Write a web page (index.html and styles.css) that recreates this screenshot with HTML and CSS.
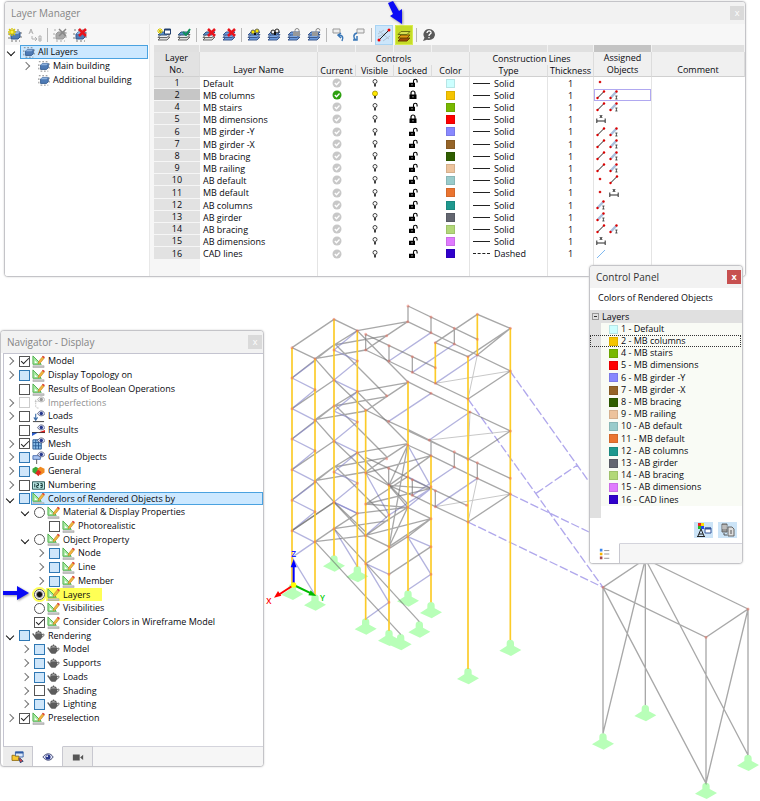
FILE: index.html
```html
<!DOCTYPE html>
<html lang="en">
<head>
<meta charset="utf-8">
<title>Layer Manager</title>
<link rel="stylesheet" href="styles.css">
</head>
<body>
<svg class="sprite" aria-hidden="true">
  <defs>
    <symbol id="i-sheets" viewBox="0 0 14 14"><path d="M1 12l3-3h9l-3 3z" fill="#ddd" stroke="#666"/><path d="M1 9.500l3-3h9l-3 3z" fill="#eee" stroke="#666"/><path d="M1 7l3-3h9l-3 3z" fill="#5b93d0" stroke="#35557c"/></symbol>
    <symbol id="i-bluesheets" viewBox="0 0 14 14"><path d="M1 12l3-3h9l-3 3z" fill="#6b9be0" stroke="#3c598c"/><path d="M1 9.500l3-3h9l-3 3z" fill="#7faae6" stroke="#3c598c"/><path d="M1 7l3-3h9l-3 3z" fill="#6b9be0" stroke="#3c598c"/></symbol>
    <symbol id="i-box" viewBox="0 0 14 14"><path d="M1 2h2M5 2h2M9 2h2M1 5v2M1 9v2M13 4v2M13 8v2M3 13h2M7 13h2M11 13h1" stroke="#777" fill="none"/><path d="M3 6l2-2h7v5l-2 2H3z" fill="#4f7bb5" stroke="#31598f"/><path d="M3 6l2-2h7l-2 2z" fill="#8fb2dd"/></symbol>
    <symbol id="i-graybox" viewBox="0 0 14 14"><path d="M1 2h2M1 5v2M1 9v2M13 4v2M13 8v2M3 13h2M7 13h2M11 13h1" stroke="#aaa" fill="none"/><path d="M3 6l2-2h7v5l-2 2H3z" fill="#aaa" stroke="#999"/></symbol>
    <symbol id="i-redx" viewBox="0 0 14 14"><path d="M6 1l7 7M13 1L6 8" stroke="#e8141c" stroke-width="2.500"/></symbol>
    <symbol id="i-star" viewBox="0 0 14 14"><path d="M4 0v8M0 4h8M1 1l6 6M7 1L1 7" stroke="#d8c800" stroke-width="1.300"/><circle cx="4" cy="4" r="1.500" fill="#fff04a"/></symbol>

    <symbol id="new-group" viewBox="0 0 14 14"><use href="#i-box"/><use href="#i-star"/></symbol>
    <symbol id="rename" viewBox="0 0 14 14"><path d="M1 6l2-5 2 5M2 4h2M4 8v3h5M7 9l2 2-2 2M11 8v5h2v-2h-2M11 8h2v3" stroke="#b0b0b0" fill="none"/></symbol>
    <symbol id="del-gray" viewBox="0 0 14 14"><use href="#i-graybox"/><path d="M6 1l7 7M13 1L6 8" stroke="#888" stroke-width="1.500"/></symbol>
    <symbol id="del-group" viewBox="0 0 14 14"><use href="#i-box"/><use href="#i-redx"/></symbol>
    <symbol id="new-layer" viewBox="0 0 14 14"><use href="#i-sheets"/><path d="M7.500 1h6v5h-6z" fill="#fff" stroke="#23406e"/><path d="M7 1h7v1.500H7z" fill="#23406e"/><path d="M3 0v6M0 3h6M1 1l4 4M5 1L1 5" stroke="#d8c800"/></symbol>
    <symbol id="set-layer" viewBox="0 0 14 14"><use href="#i-sheets"/><path d="M6 4l3 3 4-6" stroke="#12905a" stroke-width="2" fill="none"/></symbol>
    <symbol id="del-layer" viewBox="0 0 14 14"><use href="#i-sheets"/><use href="#i-redx"/></symbol>
    <symbol id="del-all" viewBox="0 0 14 14"><use href="#i-bluesheets"/><use href="#i-redx"/></symbol>
    <symbol id="show-all" viewBox="0 0 14 14"><use href="#i-bluesheets"/><circle cx="6" cy="4" r="2" fill="#f4e400" stroke="#665"/><circle cx="10" cy="3" r="2" fill="#f4e400" stroke="#665"/><path d="M8 5v2" stroke="#111" stroke-width="2"/></symbol>
    <symbol id="hide-all" viewBox="0 0 14 14"><use href="#i-bluesheets"/><circle cx="6" cy="4" r="2" fill="#eee" stroke="#222"/><circle cx="10" cy="3" r="2" fill="#eee" stroke="#222"/><path d="M8 4v3" stroke="#111" stroke-width="2"/></symbol>
    <symbol id="lock-all" viewBox="0 0 14 14"><use href="#i-bluesheets"/><path d="M8 4V2.500a2 2 0 014 0V4" fill="none" stroke="#888"/><path d="M6 4h7v4H6z" fill="#999"/></symbol>
    <symbol id="unlock-all" viewBox="0 0 14 14"><use href="#i-bluesheets"/><path d="M9 4V2.500a2 2 0 014 0" fill="none" stroke="#888"/><path d="M5 4h6v4H5z" fill="#999"/></symbol>
    <symbol id="import" viewBox="0 0 14 14"><path d="M1 1h7v4H1z" fill="#eee" stroke="#999"/><path d="M10 13c2-4 0-6-3-6M9 5L6 7l3 3" fill="none" stroke="#3a78b8" stroke-width="1.500"/></symbol>
    <symbol id="export" viewBox="0 0 14 14"><path d="M5 1h7v4H5z" fill="#eee" stroke="#999"/><path d="M5 5c-4 1-4 5-1 7M1 12h4V8" fill="none" stroke="#3a78b8" stroke-width="1.500"/></symbol>
    <symbol id="line-obj" viewBox="0 0 14 14"><path d="M1 9l10-5M1 6l6-4M6 13l7-5M2 3l10 8" stroke="#b3c3d2" fill="none"/><path d="M2 12L12 2" stroke="#222"/><circle cx="2" cy="12" r="1.500" fill="#e00"/><circle cx="12" cy="2" r="1.500" fill="#e00"/></symbol>
    <symbol id="color-layers" viewBox="0 0 14 14"><path d="M1 13l3-3h9l-3 3z" fill="#9c4a08" stroke="#6d3a04"/><path d="M1 10l3-3h9l-3 3z" fill="#e09b12" stroke="#744c00"/><path d="M1 6.500l3-3h9l-3 3z" fill="#d8e052" stroke="#6a7414"/></symbol>
    <symbol id="help" viewBox="0 0 14 14"><path d="M7 1a6 5.500 0 11-2 10.700L1 13l1.500-3.300A5.500 5.500 0 017 1z" fill="#5a5a5a"/><path d="M5 5c0-3 4.500-2.500 4 0C8.700 6.300 7 6 7 8M7 9v1.300" stroke="#fff" stroke-width="1.300" fill="none"/></symbol>

    <symbol id="check-circle" viewBox="0 0 10 10"><circle cx="5" cy="5" r="4.500" fill="currentColor"/><path d="M2.800 5l1.700 1.700 3-3.200" stroke="#fff" stroke-width="1.300" fill="none"/></symbol>
    <symbol id="bulb" viewBox="0 0 10 10"><circle cx="5" cy="3.500" r="2" fill="#fff" stroke="#333" stroke-width=".9"/><path d="M4.200 6h1.600v2.500H4.200z" fill="#111"/></symbol>
    <symbol id="bulb-on" viewBox="0 0 10 10"><circle cx="5" cy="3.500" r="2.500" fill="#ffe800" stroke="#a09000" stroke-width=".8"/><path d="M4.200 6h1.600v2.500H4.200z" fill="#111"/></symbol>
    <symbol id="lock" viewBox="0 0 10 10"><path d="M3 5V3a2 2 0 014 0v2" fill="none" stroke="#000" stroke-width="1.200"/><path d="M1.500 4.500h7V9h-7z" fill="#000"/><path d="M5 6v1.500" stroke="#aaa"/></symbol>
    <symbol id="unlock" viewBox="0 0 10 10"><path d="M5.500 5V3a1.800 1.800 0 013.600 0v1.500" fill="none" stroke="#000" stroke-width="1.100"/><path d="M1 4.700h6V9H1z" fill="#000"/><path d="M4 6v1.500" stroke="#aaa"/></symbol>

    <symbol id="o-node" viewBox="0 0 10 10"><circle cx="4" cy="4" r="1.300" fill="#d81818"/></symbol>
    <symbol id="o-line" viewBox="0 0 10 10"><path d="M1.500 8L8 1.500" stroke="#222"/><circle cx="1.500" cy="8" r="1.200" fill="#d00"/><circle cx="8" cy="1.500" r="1.200" fill="#d00"/></symbol>
    <symbol id="o-member" viewBox="0 0 10 10"><path d="M1.500 8L7.500 1.500" stroke="#a9bfdc" stroke-width="2.500"/><circle cx="1.500" cy="8" r="1.200" fill="#d00"/><circle cx="7.500" cy="1.500" r="1.200" fill="#d00"/><path d="M6.300 6h2.200M7.400 6v3M6.300 9h2.200" stroke="#333" stroke-width=".8"/></symbol>
    <symbol id="o-dim" viewBox="0 0 10 10"><path d="M.8 4.500V9M9.200 4.500V9M1 7h8M3.800 1l2.400 3M6.200 1L3.800 4" stroke="#111" stroke-width=".9"/></symbol>
    <symbol id="o-cad" viewBox="0 0 10 10"><path d="M1 9l8-8" stroke="#7db8f0"/></symbol>

    <symbol id="t-draw" viewBox="0 0 14 14"><path d="M1 1v9h9z" fill="#a6e8a0" stroke="#4cae4c"/><path d="M3 6v2.500h2.500z" fill="#fff"/><path d="M1 11.500h12v2H1z" fill="#c4c4c4" stroke="#999" stroke-width=".5"/><path d="M6.500 9.500l1-3 4-5 2 1.500-4 5z" fill="#f2b63c" stroke="#b87c20" stroke-width=".6"/><path d="M11.300 1.300l2 1.600" stroke="#e03c3c" stroke-width="1.600"/></symbol>
    <symbol id="i-eye" viewBox="0 0 14 14"><path d="M6 4c2-4 6-4 8 0-2 3-6 3-8 0z" fill="#e6ebff" stroke="#39405e" stroke-width=".8"/><circle cx="10" cy="3.800" r="1.800" fill="#26388c"/></symbol>
    <symbol id="t-imp" viewBox="0 0 14 14"><g opacity=".55"><path d="M4 4v7q0 2 3 2M3 6h4" stroke="#888" fill="none" stroke-dasharray="2 1"/><path d="M6 4c2-4 6-4 8 0-2 3-6 3-8 0z" fill="#eee" stroke="#444" stroke-width=".8"/><circle cx="10" cy="3.800" r="1.800" fill="#444"/></g></symbol>
    <symbol id="t-loads" viewBox="0 0 14 14"><path d="M1 12.500h12" stroke="#333"/><path d="M4 4v7M2 8l2 3 2-3" stroke="#3d6ca8" fill="none" stroke-width="1.200"/><use href="#i-eye"/></symbol>
    <symbol id="t-results" viewBox="0 0 14 14"><path d="M0 9h7l-7 4z" fill="#2a5ed0"/><path d="M6 9.500h8V6.500z" fill="#e02020"/><path d="M0 9.200h14" stroke="#222" stroke-width=".8"/><use href="#i-eye"/></symbol>
    <symbol id="t-mesh" viewBox="0 0 14 14"><path d="M1 3h9v10H1z" fill="#8cc0ea" stroke="#2a5c94"/><path d="M4 3v10M7 3v10M1 6h9M1 9.500h9" stroke="#2a5c94"/><use href="#i-eye"/></symbol>
    <symbol id="t-guide" viewBox="0 0 14 14"><path d="M1 5h8v4H1z" fill="#a9c4f0" stroke="#4a6eb0"/><path d="M5 9v5" stroke="#555"/><use href="#i-eye"/></symbol>
    <symbol id="t-general" viewBox="0 0 14 14"><path d="M4 2l4 2v4L4 10 .5 7.500V4z" fill="#3aa83a"/><path d="M9 2l4.500 2v4L9 11 6 8V4z" fill="#f08a20"/><path d="M6.500 5L10 7.500 7 12 3.500 9z" fill="#e02a20"/></symbol>
    <symbol id="t-num" viewBox="0 0 14 14"><path d="M.5 3h13v8H.5z" fill="#bdeae6" stroke="#1e4a4a"/><path d="M3 5v4M5 5h2v2H5v2h2M9 5h2v4H9M9 7h2" stroke="#0b2b2b" fill="none"/></symbol>
    <symbol id="t-pot" viewBox="0 0 14 14"><path d="M3.500 4.500h7c1.500 3 0 5.500-1.500 7H5C3 10 3 9 1 6.500L0 5l1.500-.5L3.500 7z" fill="#5c5c5c"/><path d="M4 4q3-2 6 0M7 1.500v1.500" stroke="#5c5c5c" stroke-width="1.300" fill="none"/><path d="M10.500 6q3-1.500 2.500.5T10 9" stroke="#5c5c5c" fill="none"/></symbol>

    <symbol id="tab-project" viewBox="0 0 16 14"><path d="M5 1h9v6H5z" fill="#dce8fa" stroke="#2d5ba6"/><path d="M5 1h9v2H5z" fill="#2d5ba6"/><path d="M1 5h3l1 1h4v5H1z" fill="#f7c832" stroke="#8d6a10"/><path d="M10 8l4 4-2 .5L11 14 9 9z" fill="#d44" stroke="#247"/></symbol>
    <symbol id="tab-eye" viewBox="0 0 16 14"><path d="M2 7c4-5 9-5 12 0-3 5-8 5-12 0z" fill="#e6e9fa" stroke="#2c3562"/><circle cx="8" cy="7" r="3" fill="#27378c"/><circle cx="7" cy="6" r="1" fill="#fff"/></symbol>
    <symbol id="tab-camera" viewBox="0 0 16 14"><path d="M2 4h8v7H2zM10.500 7.500L14 4.500v6z" fill="#555"/></symbol>
    <symbol id="tab-legend" viewBox="0 0 16 14"><path d="M2 1h3v3H2z" fill="#3f86ea"/><path d="M2 5.500h3v3H2z" fill="#f4b400"/><path d="M2 10h3v3H2z" fill="#a84848"/><path d="M7 3h6M7 7h6M7 12h6" stroke="#888"/></symbol>
    <symbol id="cp-colors" viewBox="0 0 16 14"><path d="M2 0h3v3H2z" fill="#e22"/><path d="M5 0h3v3H5z" fill="#fd0"/><path d="M2 3h3v3H2z" fill="#2b2"/><path d="M5 3h3v3H5z" fill="#24e"/><path d="M2 13l3-7 3 7M3 11h4M1 13.500h8" stroke="#222" fill="none"/><path d="M9 5h6v5H9z" fill="#fff" stroke="#34549a"/><path d="M9 5.500h6" stroke="#34549a" stroke-width="2"/></symbol>
    <symbol id="cp-copy" viewBox="0 0 16 14"><path d="M2 1h5v8H2z" fill="#999" stroke="#666"/><path d="M2 3h5M2 5h5" stroke="#ddd"/><path d="M8 4h4l2 2v7H8z" fill="#ddd" stroke="#666"/><path d="M10 8h2M10 10h2M4 10v2h3" stroke="#555" fill="none"/></symbol>

    <g id="flight"><path class="beam" d="M96 264L222 165 292 122 443 95 380 137 317 180 165 206 222 165 380 137M96 356L222 270M165 206L222 270 317 360M228 165L380 317M292 122L443 275"/><path class="brace" d="M165 212L96 264 165 299 96 356 165 391M292 122L222 180 292 213 222 270 292 304"/></g>
  </defs>
</svg>

<main class="desktop">
  <svg class="model" viewBox="-780 -870 2280 2403" role="img" aria-label="Wireframe model">
    <g id="supports"></g>
    <path class="cad" d="M750 243L987 575M624 327L1029 892M750 612L987 726M624 696L1029 892M828 610L952 525"/>
    <path class="thin" d="M526 280L751 243M624 327L652 195M508 450L751 423M630 366L624 508M526 650L751 612M624 696L652 565"/>
    <path class="brace" d="M387 213L513 128M457 247L583 162M526 280L652 195M386 394L513 310M508 450L630 366M526 650L652 565M457 616L583 531M443 465L513 590M317 549L387 675 513 595M317 736L387 675M443 560L513 595 443 652M317 821L387 853M317 821L387 937 317 987M443 740L513 770M443 740L513 853 443 900M222 716L292 830M96 802L165 755M96 802L165 915M222 637L292 670"/>
    <use href="#flight"/><use href="#flight" y="183"/><use href="#flight" y="366"/>
    <path class="beam" d="M96 173L222 88 292 122M96 173L165 206M444 48L652 148M444 48V95M513 81V128M583 115V162M443 95L652 195 751 243 624 327 317 180M317 133L526 233M317 133V180M387 167V213M457 200V247M526 158L652 73 751 115 624 200zM652 195L751 115M443 275L513 310 630 366 751 423 624 508 443 418M317 360L386 394 508 450 624 508M443 422L751 565M513 450V497M583 485V531M652 518V565M443 465L513 497 652 565 751 612 624 696 526 650 457 616 386 586 317 549M317 502L457 569 620 646M386 535V586M457 569V616M526 602V650"/>
    <path class="beam" d="M443 465L387 586M513 497L317 549M513 497L387 586M317 642L443 560M317 642L513 595M387 586L443 652 387 770M387 770L443 465M317 736L513 686 387 770zM317 642L443 652 513 686M317 821L443 740 513 686M387 853L513 770M387 586L513 595M96 722L222 637M165 755L222 716 292 670 443 652 380 692 317 737 165 755M222 716L386 692M165 755L422 1033M222 716L478 995M222 637L317 737"/>
    <path class="beam" d="M1029 892L1156 807 1464 957 1338 1042zM1029 892V1330M1156 807V1245M1338 1042V1480M1464 957V1395M1156 807L1464 1395M1156 807L1029 1330M1029 892L1338 1480 1464 957"/>
    <path class="column" d="M96 173V885M165 206V915M222 88V797M292 122V830M317 360V990M387 586V1022M444 275V903M513 497V937M526 158V280M624 200V1137M652 73V195M751 115V1050"/>
    <path class="node" d="M96 173h0M222 88h0M292 122h0M165 206h0M317 133h0M317 180h0M387 167h0M387 213h0M457 200h0M457 247h0M444 48h0M443 95h0M513 81h0M513 128h0M583 115h0M583 162h0M526 158h0M526 233h0M526 280h0M624 200h0M624 327h0M652 73h0M652 148h0M652 195h0M751 115h0M751 243h0M380 137h0M380 317h0M380 506h0M96 264h0M96 356h0M96 447h0M96 539h0M96 631h0M96 722h0M165 299h0M165 391h0M165 482h0M165 575h0M165 665h0M165 755h0M222 180h0M222 270h0M222 348h0M222 454h0M222 546h0M222 637h0M222 716h0M292 213h0M292 304h0M292 396h0M292 488h0M292 580h0M292 670h0M317 360h0M386 394h0M443 275h0M513 310h0M630 366h0M751 423h0M508 450h0M624 508h0M583 485h0M652 518h0M751 565h0M513 497h0M583 531h0M652 565h0M751 612h0M624 696h0M620 646h0M526 602h0M526 650h0M457 569h0M457 616h0M386 535h0M387 586h0M317 549h0M317 642h0M317 737h0M317 821h0M387 675h0M387 770h0M387 853h0M387 937h0M443 465h0M443 560h0M443 652h0M443 740h0M513 590h0M513 686h0M513 770h0M513 853h0M1029 892h0M1338 1042h0M1464 957h0"/>
    <g class="axis"><path stroke="#00f" d="M101 885V825"/><path stroke="#0b0" d="M101 885L155 911"/><path stroke="#f00" d="M101 885L55 915"/><polygon fill="#00f" points="92,832 101,808 110,832"/><polygon fill="#0b0" points="145,916 169,918 152,901"/><polygon fill="#f00" points="42,923 54,903 64,917"/></g>
    <circle cx="101" cy="885" r="8" fill="#ff0"/>
    <g class="axis-name"><text x="94" y="801" fill="#22f">Z</text><text x="19" y="943" fill="#f00">X</text><text x="180" y="934" fill="#0c0">Y</text></g>
  </svg>

  <section class="window manager">
    <header class="titlebar"><h2>Layer Manager</h2><button class="close" aria-label="Close">x</button></header>
    <div class="split">
      <aside class="groups">
        <div class="toolbar" data-icons="new-group rename | del-gray del-group"></div>
        <ul class="grouptree">
          <li class="root"><i class="chev open"></i><a href="#" class="picked"><svg><use href="#i-box"/></svg>All Layers</a></li>
          <li class="child"><i class="chev"></i><a href="#"><svg><use href="#i-box"/></svg>Main building</a></li>
          <li class="child"><i class="chev none"></i><a href="#"><svg><use href="#i-box"/></svg>Additional building</a></li>
        </ul>
      </aside>
      <div class="layers">
        <div class="toolbar" data-icons="new-layer set-layer | del-layer del-all | show-all hide-all lock-all unlock-all | import export | line-obj color-layers | help"></div>
        <table class="grid">
          <colgroup><col class="c-no"><col class="c-name"><col class="c-flag"><col class="c-flag"><col class="c-flag"><col class="c-flag"><col class="c-type"><col class="c-thick"><col class="c-obj"><col></colgroup>
          <thead>
            <tr class="strip"><td></td><td></td><td></td><td></td><td></td><td></td><td></td><td></td><td class="here"></td><td></td></tr>
            <tr><th rowspan="2" class="no">Layer<br>No.</th><th rowspan="2" class="low">Layer Name</th><th colspan="4">Controls</th><th colspan="2">Construction Lines</th><th rowspan="2">Assigned<br>Objects</th><th rowspan="2" class="low">Comment</th></tr>
            <tr><th>Current</th><th>Visible</th><th>Locked</th><th>Color</th><th>Type</th><th>Thickness</th></tr>
          </thead>
          <tbody id="rows"></tbody>
        </table>
      </div>
    </div>
  </section>

  <section class="window navigator">
    <header class="titlebar"><h2>Navigator - Display</h2><button class="close" aria-label="Close">x</button></header>
    <ul class="tree" id="tree"></ul>
    <nav class="tabs"><button aria-label="Project"><svg><use href="#tab-project"/></svg></button><button class="active" aria-label="Display"><svg><use href="#tab-eye"/></svg></button><button aria-label="Views"><svg><use href="#tab-camera"/></svg></button></nav>
  </section>

  <section class="window panel">
    <header class="titlebar"><h2>Control Panel</h2><button class="close" aria-label="Close">x</button></header>
    <h3>Colors of Rendered Objects</h3>
    <div class="legend">
      <h4><button class="fold" aria-label="Collapse"></button>Layers</h4>
      <ul id="legend"></ul>
    </div>
    <div class="actions"><button aria-label="Color settings"><svg><use href="#cp-colors"/></svg></button><button aria-label="Copy"><svg><use href="#cp-copy"/></svg></button></div>
    <nav class="tabs"><button class="active" aria-label="Legend"><svg><use href="#tab-legend"/></svg></button></nav>
  </section>

  <svg class="pointer down" viewBox="0 0 20 26"><path d="M2 3l5-2 6 10 3-2 0 15-12-8 3-2z"/></svg>
  <svg class="pointer right" viewBox="0 0 28 16"><path d="M1 6h14V1l12 7-12 7v-5H1z"/></svg>
</main>
<script src="app.js"></script>
</body>
</html>
```
FILE: styles.css
```css
* { box-sizing: border-box; }
body { margin: 0; background: #fff; color: #08080e; font: 9px/12px "Open Sans", "Noto Sans", sans-serif; }
h2, h3, h4, ul { margin: 0; padding: 0; font-size: 9px; font-weight: 400; list-style: none; }
button { padding: 0; border: 0; background: none; font: inherit; color: inherit; }
a { color: inherit; text-decoration: none; }
.sprite { position: absolute; width: 0; height: 0; }
.desktop { position: relative; overflow: hidden; }

/* 3D view */
.model { display: block; width: 100%; }
.model path { fill: none; }
.model .base { fill: #b8ffb8; }
.beam { stroke: #6e6e6e; stroke-opacity: .6; stroke-width: 4; fill: none; }
.brace { stroke: #8080c8; stroke-opacity: .6; stroke-width: 4; fill: none; }
.thin { stroke: #c8c8c8; stroke-width: 3; }
.cad { stroke: #b0a8ec; stroke-width: 4; stroke-dasharray: 26 8; }
.column { stroke: #fccb28; stroke-width: 5; }
.node { stroke: #f06450; stroke-opacity: .45; stroke-width: 9; stroke-linecap: round; }
.axis path { stroke-width: 6; }
.axis-name { font-size: 25px; font-weight: 600; }

/* windows */
.window { position: absolute; display: flex; flex-direction: column; background: #fff; border: 1px solid #c4c4c8; border-radius: 4px; overflow: hidden; box-shadow: 0 0 2px #ccc; }
.manager { left: 4px; right: 14px; top: 1px; }
.navigator { left: 0; top: 330px; width: 264px; }
.panel { right: 17px; top: 265px; width: 154px; }
.titlebar { display: flex; align-items: center; height: 22px; padding: 0 1px 0 6px; background: #f2f2f2; color: #858585; }
.titlebar h2 { flex: 1; font-size: 10px; }
.close { width: 14px; height: 14px; background: #dadada; color: #fff; line-height: 12px; }
.panel .titlebar { color: #333; }
.panel .close { background: #c75050; font-weight: 700; }

/* layer manager */
.split { display: flex; background: #f6f6f6; }
.groups { display: flex; flex-direction: column; width: 145px; margin-right: 4px; border-right: 1px solid #e8e8e8; }
.layers { flex: 1; min-width: 0; }
.toolbar { display: flex; align-items: center; gap: 4px; height: 21px; padding-left: 2px; background: #f7f7f7; }
.toolbar button { display: grid; place-items: center; width: 16px; height: 18px; }
.toolbar svg { width: 14px; height: 14px; }
.toolbar .bar { width: 1px; height: 14px; background: #b8b8b8; }
.toolbar .toggled { background: #cce6fb; outline: 1px solid #a8d4f4; }
.toolbar .marked { background: #c5dc28; outline: 1px solid #d8ec50; }
.grouptree { flex: 1; padding-right: 1px; background: #fff; }
.grouptree li { display: flex; align-items: center; height: 14px; }
.grouptree .child { padding-left: 15px; }
.grouptree a { display: flex; align-items: center; gap: 3px; height: 14px; padding: 0 3px; }
.grouptree .picked { flex: 1; background: #cce8ff; border: 1px solid #4aa2e0; padding: 0 2px; }
.grouptree svg { width: 12px; height: 12px; }
.chev { flex: none; width: 15px; height: 10px; padding-right: 4px; display: grid; place-items: center; }
.chev::before { content: ""; width: 5px; height: 5px; border: solid #777; border-width: 1px 1px 0 0; transform: rotate(45deg); }
.chev.open::before { border-color: #111; border-width: 0 1px 1px 0; }
.chev.none::before { display: none; }

.grid { width: 100%; table-layout: fixed; border-collapse: separate; border-spacing: 0; background: #fff; }
.c-no { width: 46px; } .c-name { width: 118px; } .c-flag { width: 38px; } .c-type { width: 78px; } .c-thick { width: 46px; } .c-obj { width: 58px; }
.grid th, .grid td { padding: 0; }
.grid th { background: #f0f0f0; font-weight: 400; text-align: center; vertical-align: middle; height: 12px; border-right: 1px solid #dcdcdc; border-bottom: 1px solid #d0d0d0; line-height: 11px; }
.grid th[colspan] { border-bottom: 0; }
.grid thead .no { background: #e2e2e2; }
.grid th[rowspan] { height: 25px; line-height: 12px; }
.grid th.low { vertical-align: bottom; }
.strip td { height: 7px; background: #e0e0e0; border-right: 1px solid #f2f2f2; }
.strip .here { background: #c4c4c4; }
tbody tr { height: 12px; line-height: 11px; }
tbody tr:nth-child(5n) { height: 13px; }
tbody td { height: 12px; text-align: center; vertical-align: middle; }
tbody td:nth-child(2), tbody td:nth-child(6), tbody td:nth-child(7), tbody td:nth-child(8), tbody td:nth-child(9) { border-right: 1px solid #e4e4e4; }
tbody .no { background: #e2e2e2; border-bottom: 1px solid #f6f6f6; }
tbody .current .no { background: #c6c6c6; }
tbody .name { padding-left: 3px; text-align: left; }
tbody button { display: block; width: 10px; height: 10px; margin: 0 auto; color: #c8c8c8; }
tbody .current button { color: #2ea010; }
tbody svg { display: block; width: 10px; height: 10px; }
.swatch { display: block; width: 9px; height: 9px; margin: 0 auto; border: 1px solid rgba(0, 0, 0, .1); }
.type { display: flex; align-items: center; gap: 4px; padding-left: 3px; }
.type i { width: 17px; border-top: 1px solid #222; }
.type .dashed { border-top-style: dashed; }
.objs { display: flex; align-items: center; gap: 3px; height: 12px; padding-left: 2px; }
.current .objs { border: 1px solid #b0a8f0; padding-left: 1px; }
.filler, .filler td { height: 16px; }
tbody .filler .no { background: #f6f6f6; }

/* navigator */
.tree { margin-left: 2px; padding-bottom: 21px; border-left: 1px solid #c4c4d0; border-top: 1px solid #c4c4d0; }
.tree li { display: flex; align-items: center; height: 14px; }
.tree li:nth-child(7n), .tree li:nth-child(7n+4) { height: 13px; }
.tree .l1 { padding-left: 15px; }
.tree .l2 { padding-left: 30px; }
.tree input { appearance: none; flex: none; width: 11px; height: 11px; margin: 0 1px 0 0; border: 1px solid #555; background: #fff; }
.tree input.part { background: #cfe6fa; border-color: #2f78b4; }
.tree input:disabled { border-color: #ccc; }
.tree input[type=radio] { border-radius: 50%; }
.tree input[type=radio]:checked { background: radial-gradient(#111 0 2px, #fff 4px); }
.tree input[type=checkbox]:checked { display: grid; place-items: center; }
.tree input[type=checkbox]:checked::before { content: ""; width: 7px; height: 3px; border: solid #222; border-width: 0 0 1px 1px; transform: translateY(-1px) rotate(-45deg); }
.tree label { display: flex; align-items: center; gap: 3px; height: 100%; padding: 0 1px; white-space: nowrap; }
.tree svg { width: 13px; height: 13px; }
.tree .off { color: #909090; }
.tree .picked label { flex: 1; background: #cce8ff; outline: 1px solid #4aa2e0; outline-offset: -1px; }
.tree .marked label { padding-right: 12px; background: #ff5; }
.tree .marked input { box-shadow: 0 0 0 2px #ff5; }
.tabs { display: flex; height: 20px; margin-left: 2px; background: linear-gradient(#d4d4dc 1px, #f6f6f6 1px); }
.tabs button { display: grid; place-items: center; width: 30px; background: #ececec; border: solid #c8c8d0; border-width: 1px 1px 0 0; }
.tabs .active { background: #fff; border-top-color: #fff; }
.tabs svg { width: 14px; height: 12px; }

/* control panel */
.panel h3 { height: 22px; padding: 4px 0 0 8px; }
.legend { padding-bottom: 12px; background: linear-gradient(90deg, #e0e0e0 11px, #fff 11px); }
.legend h4 { display: flex; align-items: center; gap: 3px; height: 13px; padding-left: 2px; background: #e0e0e0; }
.fold { display: grid; place-items: center; width: 7px; height: 7px; border: 1px solid #999; }
.fold::before { content: ""; width: 3px; height: 1px; background: #333; }
.legend ul { margin-left: 11px; background: #f9fbf5; }
.legend li { display: flex; align-items: center; gap: 3px; height: 12px; padding-left: 8px; }
.legend li:nth-child(5n) { height: 13px; }
.legend .swatch { margin: 0; }
.legend .current { margin-left: -11px; margin-right: 1px; padding-left: 19px; outline: 1px dotted #333; outline-offset: -1px; }
.actions { display: flex; justify-content: flex-end; gap: 5px; padding: 4px 5px 5px; }
.actions button { display: grid; place-items: center; width: 19px; height: 16px; background: #cce4f7; }
.actions svg { width: 16px; height: 14px; }
.panel .tabs { margin: 0; }

/* callout arrows */
.pointer { position: absolute; fill: #0a0af5; filter: drop-shadow(1px 1px 1px #999); }
.down { left: 386px; top: 0; width: 20px; height: 26px; }
.right { left: 2px; top: 585px; width: 28px; height: 16px; }
```
FILE: app.js
```js
const icon = id => `<svg><use href="#${id}"/></svg>`;

// number, name, color, assigned objects
const layers = [
  [1, "Default", "#ccffff", "node"],
  [2, "MB columns", "#f5c400", "line member"],
  [4, "MB stairs", "#78b800", "line member"],
  [5, "MB dimensions", "#ff0000", "dim"],
  [6, "MB girder -Y", "#8888ff", "line member"],
  [7, "MB girder -X", "#956428", "line member"],
  [8, "MB bracing", "#2f5e00", "line member"],
  [9, "MB railing", "#edc39c", "line member"],
  [10, "AB default", "#98cbcb", "node line"],
  [11, "MB default", "#ea7430", "node dim"],
  [12, "AB columns", "#1e988e", "member"],
  [13, "AB girder", "#636670", "member"],
  [14, "AB bracing", "#b2d878", "line member"],
  [15, "AB dimensions", "#e07aff", "dim"],
  [16, "CAD lines", "#3000cc", "cad"]
];
const locked = [2, 5];

document.getElementById("rows").innerHTML = layers.map(([no, name, color, objs]) => `
<tr class="${no === 2 ? "current" : ""}"><td class="no">${no}</td><td class="name">${name}</td>
<td><button aria-label="Current">${icon("check-circle")}</button></td>
<td><button aria-label="Visible">${icon(no === 2 ? "bulb-on" : "bulb")}</button></td>
<td><button aria-label="Locked">${icon(locked.includes(no) ? "lock" : "unlock")}</button></td>
<td><span class="swatch" style="background:${color}"></span></td>
<td><div class="type"><i class="${no === 16 ? "dashed" : ""}"></i>${no === 16 ? "Dashed" : "Solid"}</div></td>
<td>1</td><td><div class="objs">${objs.split(" ").map(o => icon("o-" + o)).join("")}</div></td><td></td></tr>`).join("")
  + `<tr class="filler"><td class="no"></td>${"<td></td>".repeat(9)}</tr>`;

document.getElementById("legend").innerHTML = layers.map(([no, name, color]) =>
  `<li class="${no === 2 ? "current" : ""}"><span class="swatch" style="background:${color}"></span>${no} - ${name}</li>`).join("");

// level, arrow (> closed, v open, - none), box state, icon, label
const tree = [
  [0, ">", "on", "draw", "Model"],
  [0, ">", "part", "draw", "Display Topology on"],
  [0, "-", "", "draw", "Results of Boolean Operations"],
  [0, ">", "off", "imp", "Imperfections"],
  [0, ">", "", "loads", "Loads"],
  [0, "-", "", "results", "Results"],
  [0, ">", "on", "mesh", "Mesh"],
  [0, ">", "part", "guide", "Guide Objects"],
  [0, ">", "part", "general", "General"],
  [0, ">", "", "num", "Numbering"],
  [0, "v", "part", "draw", "Colors of Rendered Objects by", "picked"],
  [1, "v", "radio", "draw", "Material &amp; Display Properties"],
  [2, "-", "", "draw", "Photorealistic"],
  [1, "v", "radio", "draw", "Object Property"],
  [2, ">", "part", "draw", "Node"],
  [2, ">", "part", "draw", "Line"],
  [2, ">", "part", "draw", "Member"],
  [1, "-", "radio on", "draw", "Layers", "marked"],
  [1, "-", "radio", "draw", "Visibilities"],
  [1, "-", "on", "draw", "Consider Colors in Wireframe Model"],
  [0, "v", "part", "pot", "Rendering"],
  [1, ">", "part", "pot", "Model"],
  [1, ">", "part", "pot", "Supports"],
  [1, ">", "part", "pot", "Loads"],
  [1, ">", "", "pot", "Shading"],
  [1, ">", "part", "pot", "Lighting"],
  [0, ">", "on", "draw", "Preselection"]
];
const arrows = { ">": "", "v": "open", "-": "none" };
document.getElementById("tree").innerHTML = tree.map(([level, arrow, state, pic, text, extra = ""], i) => {
  const radio = state.startsWith("radio");
  return `<li class="l${level} ${extra} ${state === "off" ? "off" : ""}"><i class="chev ${arrows[arrow]}"></i>
<input id="t${i}" type="${radio ? "radio" : "checkbox"}" ${radio ? 'name="by"' : ""} class="${state === "part" ? "part" : ""}" ${state.endsWith("on") ? "checked" : ""} ${state === "off" ? "disabled" : ""}>
<label for="t${i}">${icon("t-" + pic)}${text}</label></li>`;
}).join("");

const extras = { "line-obj": "toggled", "color-layers": "marked" };
document.querySelectorAll(".toolbar").forEach(bar => {
  bar.innerHTML = bar.dataset.icons.split(" ").map(n =>
    n === "|" ? '<span class="bar"></span>' : `<button aria-label="${n}" class="${extras[n] || ""}">${icon(n)}</button>`).join("");
});

// base centre of each support in model units
const bases = [[97, 912], [165, 944], [222, 827], [292, 859], [317, 1016], [387, 1050], [422, 1063], [478, 1025],
  [444, 932], [513, 967], [624, 1165], [751, 1080], [1029, 1361], [1156, 1276], [1338, 1509], [1464, 1425]];
document.getElementById("supports").innerHTML = bases.map(([x, y]) =>
  `<path class="base" transform="translate(${x} ${y})" d="M-33 2L-11-12V-20a11 11 0 0122 0v8L33 0 2 18z"/>`).join("");
```
